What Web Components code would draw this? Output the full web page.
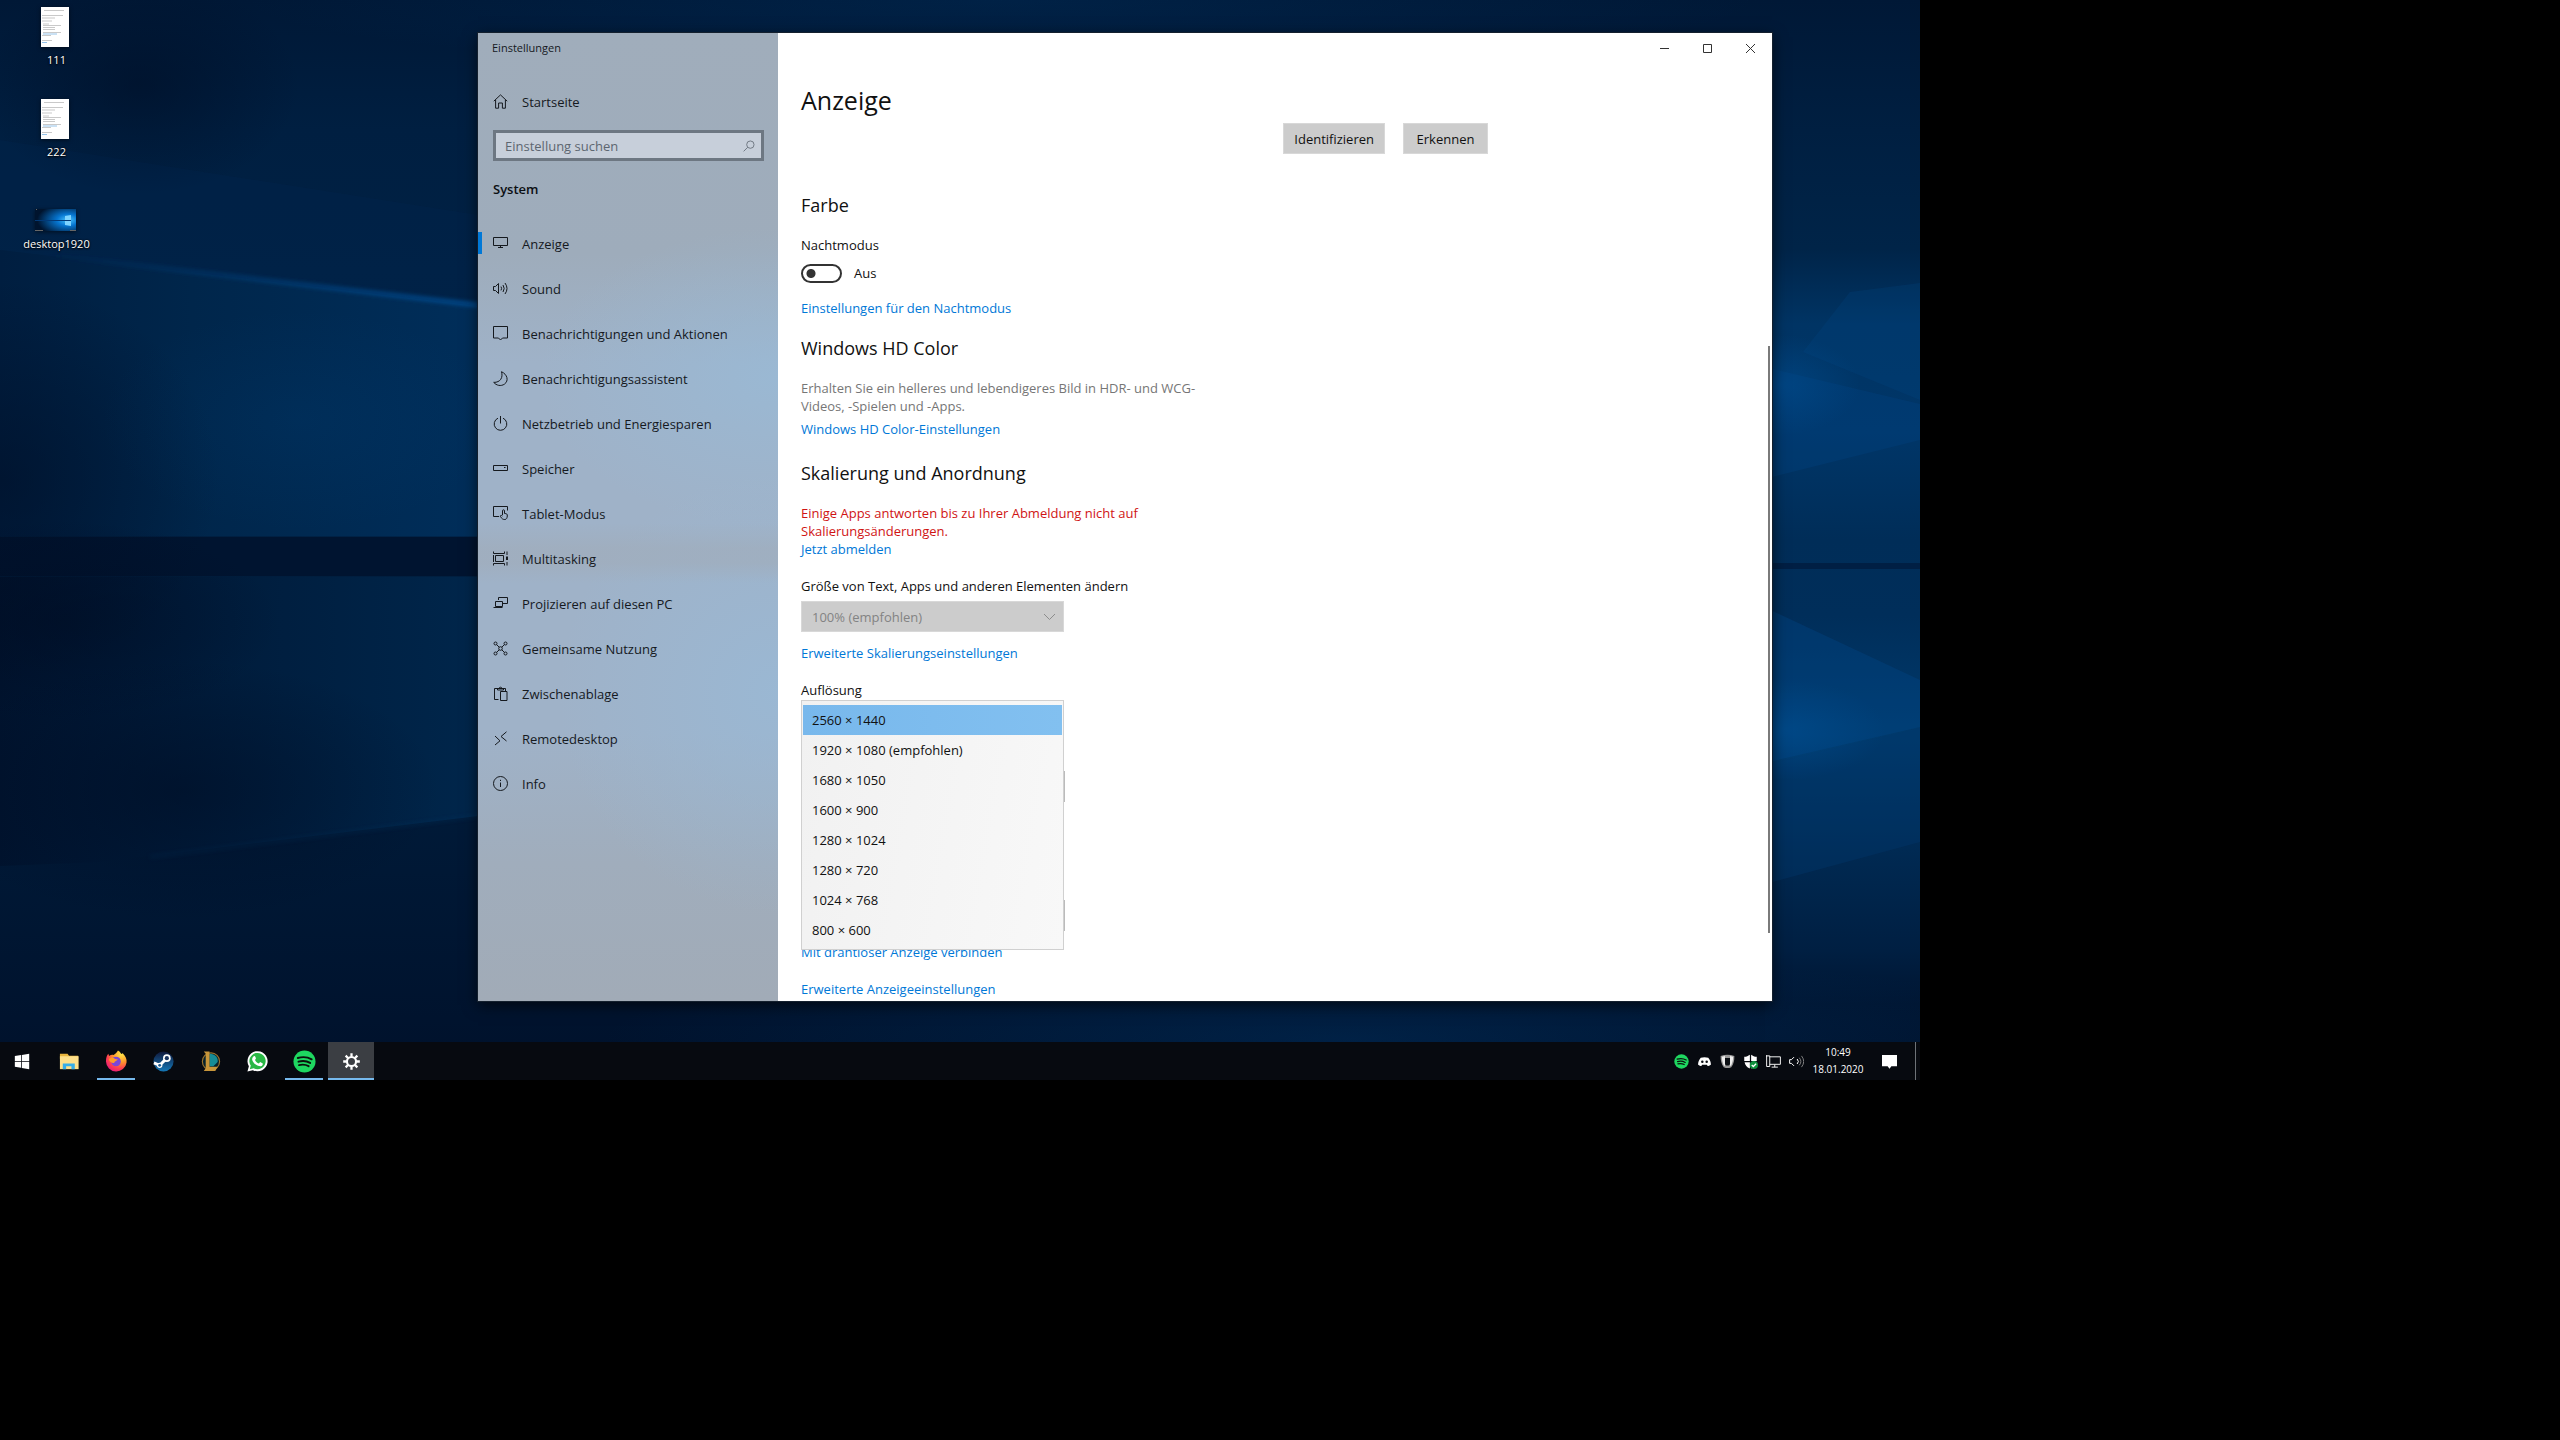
<!DOCTYPE html>
<html lang="de">
<head>
<meta charset="utf-8">
<title>Einstellungen</title>
<style>
html,body{margin:0;height:100%;background:#000;overflow:hidden}
body{font:13px/18px "Open Sans","Noto Sans",sans-serif;color:#111}
</style>
</head>
<body>
<desktop-shell>
  <wall-paper slot="wallpaper"></wall-paper>
  <desktop-file kind="doc">111</desktop-file>
  <desktop-file kind="doc">222</desktop-file>
  <desktop-file kind="picture">desktop1920</desktop-file>
  <settings-window slot="window"></settings-window>
  <task-bar slot="taskbar"></task-bar>
</desktop-shell>
<script>
const define = (name, html, setup) => {
  const tpl = document.createElement('template');
  tpl.innerHTML = html;
  customElements.define(name, class extends HTMLElement {
    connectedCallback() {
      if (this.shadowRoot) return;
      this.attachShadow({ mode: 'open' }).append(tpl.content.cloneNode(true));
      if (setup) setup(this, this.shadowRoot);
    }
  });
};

const LINE = {
  home: '<path d="M.8 7.2 7.5.9l6.7 6.3M2.6 6v8.2h3V9h3.8v5.2h3V6"/>',
  search: '<circle cx="9.2" cy="5.8" r="4.6"/><path d="M5.8 9.2.8 14.2"/>',
  display: '<path d="M.5 1.5h14v8H.5zM7.5 9.5v2M5 11.5h5"/>',
  sound: '<path d="M.5 5.5h2L5.5 2.5v10l-3-3h-2z"/><path d="M8 5.6q1.2 1.9 0 3.8M10 4q2.4 3.5 0 7M12 2q4 5.5 0 11"/>',
  notify: '<path d="M.5.5h14v11.5h-5l-2 2-2-2h-5z"/>',
  moon: '<path d="M8.5.7c5.8 2.6 7.6 9 3 12.4-3.5 2.5-8.2 1.4-10.8-1.7C7.5 11.5 10.2 6.5 8.5.7z"/>',
  power: '<path d="M5 2.2a6.3 6.3 0 1 0 5 0M7.5 0v7.5"/>',
  storage: '<path d="M.5 4.5h14v5H.5zM11 6.5h1.500"/>',
  tablet: '<path d="M6 10.5H.5v-10h14v4"/><path d="M9.5 9V4.800a1 1 0 0 1 2 0V7.500c2.200 0 3 .6 2.800 2.500-.2 2-.8 3.500-2.500 3.500-2 0-3-.7-4.500-3.200 0-1 1-1.300 2.200-.3"/>',
  multi: '<path d="M2.500 4.500h8v6h-8zM.5 4v7" /><path d="M.5.5v2h11v-2M.5 14.500v-2h11v2"/><path d="M14 .5v3.500M14 11v3.500"/><path d="M14 5.500v3.500" stroke-width="2"/>',
  project: '<path d="M5.5 4V1.500h9v6h-5M2.500 5.500h7v5h-7zM.5 11.500h9"/>',
  share: '<circle cx="2.5" cy="2.5" r="1.500"/><circle cx="12.5" cy="2.5" r="1.500"/><circle cx="2.5" cy="12.5" r="1.500"/><circle cx="12.5" cy="12.5" r="1.500"/><circle cx="7.5" cy="7.5" r="1.800"/><path d="M3.600 3.600 6.200 6.200M11.400 3.600 8.800 6.200M3.600 11.400 6.200 8.800M11.400 11.400 8.800 8.800"/>',
  clipboard: '<path d="M5.5 13.5h-4v-11h11v3M4.500 4V2.500h1.700a1.300 1.300 0 0 1 2.600 0h1.700V4zM7.500 5.500h6.500v9H7.500z"/>',
  remote: '<path d="M2 5l5 4.800L2 14M13.500.8 8 5.500 13.500 10"/>',
  info: '<circle cx="7.5" cy="7.5" r="7"/><path d="M7.5 6.500V11M7.500 3.800v1.200"/>',
  chevron: '<path d="M2 5l5.5 5.500L13 5"/>',
  minimize: '<path d="M3 7.500h9"/>',
  maximize: '<path d="M3.500 3.500h8v8h-8z"/>',
  close: '<path d="M3 3l9 9M12 3l-9 9"/>'
};
define('line-icon', `<style>
:host{display:block;width:15px;height:15px;flex:none}
svg{display:block;width:100%;height:100%;overflow:visible;fill:none;stroke:currentColor;stroke-width:1}
</style><svg viewBox="0 0 15 15" aria-hidden="true"></svg>`,
  (el, root) => { root.querySelector('svg').innerHTML = LINE[el.getAttribute('name')] || ''; });

const APP = {
  start: '<g fill="#fff"><path d="M4 6.200l6.500-1v6.300H4zM11.300 5.100 19 4v7.500h-7.700zM4 12.300h6.500v6.300l-6.500-1zM11.300 12.300H19V20l-7.700-1.200z"/></g>',
  explorer: '<path fill="#e9b63e" d="M2 4h8l1.500 2H21v3H2z"/><path fill="#fee08a" d="M2 6.500h19.500V20H2z"/><path fill="#37aee8" d="M5 14h12.500v6H14v-3H8.500v3H5z"/>',
  firefox: '<defs><radialGradient id="f" cx=".75" cy=".15" r="1"><stop offset="0" stop-color="#ffe94a"/><stop offset=".4" stop-color="#ff9a2a"/><stop offset=".7" stop-color="#ff4050"/><stop offset="1" stop-color="#e01080"/></radialGradient></defs><path fill="url(#f)" d="M1 12C1 8 2 5.500 3.500 4l.7 2.200C6 5 7.500 4.800 9 5.200 11 4 12.500 2.500 13.500.5c2 1 3 2.500 3.400 3.800l1.600-1c3 3 4.500 6 4 9.700A10.800 10.800 0 0 1 1 12z"/><circle cx="11.500" cy="12" r="5" fill="#7b46d8"/><path fill="#ff9a2a" d="M4 9.500c3-2 5-1.500 6.500-.2l3 .7c-1 1.500-3.500 1.500-4 3.500-2 .5-5-1-5.500-4z"/>',
  steam: '<defs><linearGradient id="s" x2="0" y2="1"><stop offset="0" stop-color="#10183a"/><stop offset="1" stop-color="#1478b8"/></linearGradient></defs><circle cx="12" cy="12" r="10.500" fill="url(#s)"/><path d="M2 13.500 8 16l7-7" fill="none" stroke="#fff" stroke-width="3"/><circle cx="15.500" cy="8.500" r="4" fill="#fff"/><circle cx="15.500" cy="8.500" r="2.200" fill="#18335e"/><circle cx="8" cy="16" r="2.800" fill="#fff"/><circle cx="8" cy="16" r="1.500" fill="#1a5a90"/>',
  league: '<circle cx="12.500" cy="12" r="9" fill="#06222c" stroke="#9c742d" stroke-width="1.200"/><path fill="#168c96" d="M11 4c6 0 9 4 8.500 8.500L15 17h-4z"/><path fill="#c8963a" d="M5 1.500h6v16h8.500L17 22H5l2-3V4z"/>',
  whatsapp: '<path fill="#fff" d="M1.500 22.500 3 17A10.500 10.500 0 1 1 7.200 21z"/><path fill="#29b845" d="M4 20l1-3.700A8.500 8.500 0 1 1 8 19z"/><path fill="#fff" d="M8.200 6.500c1.400-.6 1.600.8 2.200 2.400l-1 1.500c1 1.900 2.200 2.900 4 3.700l1.400-1.500 2.700 1.500c.3 2.300-2 3.300-4 2.700-4-1.200-6.500-4-7.100-6.900 0-1.500.8-2.900 1.800-3.400z"/>',
  spotify: '<circle cx="12" cy="12" r="11.500" fill="#1ed760"/><path d="M5 8.300c5-1.400 10.500-.9 14.500 1.400M5.700 12.200c4.300-1.200 8.800-.7 12.200 1.300M6.300 15.800c3.700-1 7-.6 10 1.100" fill="none" stroke="#0a120c" stroke-width="2" stroke-linecap="round"/>',
  gear: '<circle cx="12" cy="12" r="5.200" fill="none" stroke="#fff" stroke-width="2.400"/><g stroke="#fff" stroke-width="2.600"><path d="M12 2.500v4M12 17.500v4M2.500 12h4M17.500 12h4M5.300 5.300 8 8M16 16l2.700 2.700M18.700 5.300 16 8M8 16l-2.700 2.700"/></g>',
  discord: '<path fill="#fff" d="M6 6c4-1.200 8-1.200 12 0 3 3.500 4.500 8 4.200 11-2 1.500-3.600 2-5.200 2l-1.200-2h-7.600L7 19c-1.600 0-3.200-.5-5.200-2C1.500 14 3 9.500 6 6z"/><circle cx="8.500" cy="12.500" r="2" fill="#0b0f14"/><circle cx="15.500" cy="12.500" r="2" fill="#0b0f14"/>',
  cup: '<path fill="#999" d="M1 3q11-4 22 0c0 7-1 13-5 18q-6 3-12 0C2 16 1 10 1 3z"/><path fill="#eee" d="M3 4.500 8 3v16l-2-1C4 14 3 9 3 4.500zM16 3l5 1.500c0 5-1 9-3 13.500l-2 1z"/><path fill="#0b0f14" d="M8 6.500h8v9c0 4-8 4-8 0z"/>',
  shield: '<path fill="#fff" d="M11 1v10H2V4.500C6 4 8 3 11 1zM13 1c3 2 5 3 9 3.500V11h-9zM2.500 13H11v10c-5-2-7.500-5-8.500-10zM13 13h8.500c-1 5-3.500 8-8.500 10z"/><circle cx="17.500" cy="17.500" r="6.500" fill="#10913e"/><path d="M14 17.500l2.500 2.500 4.500-4.500" fill="none" stroke="#fff" stroke-width="2"/>',
  network: '<path d="M6 4.500h17v12H6M1 2v18h5V3H0M14 17v4M9 21h10" fill="none" stroke="#fff" stroke-width="1.500"/>',
  volume: '<path d="M8 5 4 9H1v6h3l4 4" fill="none" stroke="#fff" stroke-width="1.600"/><path d="M13 8q4 4 0 8" fill="none" stroke="#fff" stroke-width="1.600"/><path d="M16.500 6q5 6 0 12M20 3q7 9 0 18" fill="none" stroke="#888" stroke-width="1.500"/>',
  action: '<path fill="#fff" d="M0 1.500h24v18h-9l-3 4-3-4H0z"/>'
};
define('app-icon', `<style>
:host{display:block;width:23px;height:23px;flex:none}
svg{display:block;width:100%;height:100%}
</style><svg viewBox="0 0 24 24" aria-hidden="true"></svg>`,
  (el, root) => { root.querySelector('svg').innerHTML = APP[el.getAttribute('name')]; });

define('wall-paper', `<style>
:host{display:block;width:100%;height:100%}
svg{display:block;width:100%;height:100%}
</style>
<svg viewBox="0 0 1920 1080" preserveAspectRatio="none" aria-hidden="true">
<defs>
<linearGradient id="base" x2="0" y2="1"><stop offset="0" stop-color="#001836"/><stop offset=".12" stop-color="#001f41"/><stop offset=".25" stop-color="#002144"/><stop offset=".75" stop-color="#001a38"/><stop offset="1" stop-color="#00112b"/></linearGradient>
<linearGradient id="beam"><stop offset="0" stop-color="#001e40"/><stop offset=".1" stop-color="#00264b"/><stop offset=".25" stop-color="#002e5a"/><stop offset="1" stop-color="#00305c"/></linearGradient>
<linearGradient id="low"><stop offset="0" stop-color="#00132e"/><stop offset=".12" stop-color="#001d3d"/><stop offset=".25" stop-color="#00264b"/></linearGradient>
<linearGradient id="edge" gradientUnits="userSpaceOnUse" x1="40" y1="0" x2="478" y2="0"><stop offset="0" stop-color="#00488c" stop-opacity="0"/><stop offset="1" stop-color="#005098"/></linearGradient>
<linearGradient id="right" x2="0" y2="1"><stop offset="0" stop-color="#001836"/><stop offset=".12" stop-color="#001f41"/><stop offset=".23" stop-color="#002448"/><stop offset=".3" stop-color="#003464"/><stop offset=".4" stop-color="#003668"/><stop offset=".5" stop-color="#002d58"/><stop offset=".57" stop-color="#002e5a"/><stop offset=".68" stop-color="#003a6c"/><stop offset=".8" stop-color="#002850"/><stop offset=".88" stop-color="#001f42"/><stop offset=".93" stop-color="#001531"/><stop offset="1" stop-color="#00112b"/></linearGradient>
<radialGradient id="dark"><stop offset="0" stop-color="#000c22" stop-opacity=".5"/><stop offset="1" stop-color="#000c22" stop-opacity="0"/></radialGradient>
<radialGradient id="glow"><stop offset="0" stop-color="#00539a" stop-opacity=".45"/><stop offset="1" stop-color="#00539a" stop-opacity="0"/></radialGradient>
<filter id="soft" filterUnits="userSpaceOnUse" x="0" y="200" width="600" height="700"><feGaussianBlur stdDeviation="2"/></filter>
</defs>
<path fill="url(#base)" d="M0 0h1920v1080H0z"/>
<path fill="#00264c" opacity=".35" d="M0 140 478 215V310L0 250z"/>
<path fill="url(#beam)" d="M0 250 478 306 1920 400V538L0 536z"/>
<path fill="url(#low)" d="M0 577 1920 576V700L478 816 100 862 0 866z"/>
<path fill="#001430" d="M0 537h1920v39H0z"/>
<path d="M40 254 478 305" stroke="url(#edge)" stroke-width="4" filter="url(#soft)"/>
<path d="M150 857 478 816" stroke="#003462" stroke-width="2" opacity=".5" filter="url(#soft)"/>
<ellipse cx="0" cy="480" rx="220" ry="200" fill="url(#dark)"/>
<ellipse cx="60" cy="620" rx="220" ry="100" fill="url(#dark)"/>
<ellipse cx="140" cy="85" rx="160" ry="110" fill="url(#dark)"/>
<ellipse cx="180" cy="790" rx="260" ry="130" fill="url(#dark)"/>
<ellipse cx="300" cy="420" rx="200" ry="110" fill="url(#glow)" opacity=".25"/>
<path fill="url(#right)" d="M1765 0h155v1080h-155z"/>
<path fill="#00498a" opacity=".25" d="M1760 366 1920 404 1920 440 1760 480z"/>
<path fill="#00498a" opacity=".2" d="M1803 352 1850 292 1920 283V400z"/>
<path fill="#00498a" opacity=".35" d="M1760 605 1920 680V727L1760 764z"/>
<path fill="#00386c" opacity=".4" d="M1765 765 1920 728V842L1765 884z"/>
<path d="M1770 566h150" stroke="#001f44" stroke-width="6"/>
<ellipse cx="1780" cy="385" rx="80" ry="50" fill="url(#glow)"/>
<ellipse cx="1785" cy="730" rx="100" ry="50" fill="url(#glow)"/>
<ellipse cx="1000" cy="0" rx="760" ry="70" fill="url(#glow)" opacity=".35"/>
<ellipse cx="1350" cy="1040" rx="750" ry="90" fill="url(#glow)" opacity=".5"/>
</svg>`);

define('desktop-file', `<style>
:host{display:flex;flex-direction:column;align-items:center;width:90px;height:85px;justify-content:flex-end;gap:4px;color:#fff;font-size:11px;line-height:18px;text-shadow:0 1px 2px #000,0 0 2px #000}
svg{display:block;filter:drop-shadow(0 1px 2px #0008)}
span{padding-left:3px}
</style><svg aria-hidden="true"></svg><span><slot></slot></span>`,
  (el, root) => {
    const svg = root.querySelector('svg');
    const doc = el.getAttribute('kind') === 'doc';
    svg.setAttribute('width', doc ? 28 : 41);
    svg.setAttribute('height', doc ? 40 : 22);
    svg.setAttribute('viewBox', doc ? '0 0 28 40' : '0 0 41 22');
    svg.innerHTML = doc
      ? '<path fill="#fff" d="M0 0h28v40H0z"/><path d="M3 3.500h20M1 8.500h21M1 11h13M1 14h10M2 17h6M2 18.500h18M2 20.500h12M2 22.500h12M2 25.500h18M1 28.500h9M1 33.500h10" stroke="#bbb" stroke-width=".8"/><path d="M2 27h14M1 35.500h5" stroke="#79b4e4" stroke-width=".8"/>'
      : '<defs><radialGradient id="g" cx=".8" cy=".5" r=".75"><stop offset="0" stop-color="#49c4ff"/><stop offset=".35" stop-color="#0675d0"/><stop offset="1" stop-color="#00142e"/></radialGradient></defs><path fill="url(#g)" d="M0 0h41v22H0z"/><path fill="#7ed4ff" d="M30 7l6-1v11l-6-1z"/><path d="M0 11.500h36" stroke="#023a78"/><path d="M1 .5h1M0 21.500h8M35 21.500h6" stroke="#666"/>';
  });

define('desktop-shell', `<style>
:host{display:grid;grid-template-rows:1fr 38px;width:75vw;height:75vh;overflow:hidden;position:relative}
.wall{position:absolute;inset:0}
.files{grid-row:1;position:relative;display:flex;flex-direction:column;align-items:flex-start;width:max-content;margin-top:-16px;padding-left:10px;gap:7px}
.window{position:absolute;top:33px;left:478px;right:148px;bottom:79px;display:grid}
.bar{grid-row:2;position:relative;display:grid}
</style>
<div class="wall"><slot name="wallpaper"></slot></div>
<div class="files"><slot></slot></div>
<div class="window"><slot name="window"></slot></div>
<div class="bar"><slot name="taskbar"></slot></div>`);

define('nav-item', `<style>
:host{display:block}
a{display:flex;align-items:center;gap:14px;height:45px;padding-left:15px;color:#15191e;text-decoration:none;position:relative}
:host([current]) a::before{content:"";position:absolute;left:0;top:11px;width:4px;height:22px;background:#0078d7}
</style><a href="#"><span><slot></slot></span></a>`,
  (el, root) => {
    const icon = document.createElement('line-icon');
    icon.setAttribute('name', el.getAttribute('icon'));
    root.querySelector('a').prepend(icon);
    if (el.hasAttribute('current')) root.querySelector('a').setAttribute('aria-current', 'page');
  });

define('settings-sidebar', `<style>
:host{display:block;min-height:0;overflow:hidden;
background:linear-gradient(#a0acba00 490px,#a0acbaa0 515px,#a0acbaa0 530px,#a0acba00 550px),radial-gradient(ellipse 240px 150px at 100% 345px,#98bbd8b0 0,#98bbd800 100%),radial-gradient(ellipse 220px 220px at 100% 660px,#98bad8b0 0,#98bad800 100%),linear-gradient(#a0adbb 0,#9eacbb 220px,#9fb2c8 330px,#9fb2c8 700px,#a0adbc 830px,#a1abb7 100%)}
.title{font-size:11px;line-height:30px;padding-left:14px;color:#15191e}
nav-item.home{margin-top:16px}
.search{display:flex;align-items:center;height:31px;box-sizing:border-box;margin:6px 14px 0 15px;border:3px solid #6d7782;background:#c7cfda;padding:0 6px 0 9px;color:#5d6670}
input{flex:1;min-width:0;border:0;outline:0;background:none;font:inherit;padding:0;color:inherit}
input::placeholder{color:#5d6670;opacity:1}
.search line-icon{width:12px;height:12px}
h2{font-size:13px;line-height:24px;font-weight:600;margin:16px 0 20px;padding-left:15px;color:#0b0e12}
</style>
<div class="title">Einstellungen</div>
<nav-item class="home" icon="home">Startseite</nav-item>
<label class="search"><input type="text" placeholder="Einstellung suchen" aria-label="Einstellung suchen"><line-icon name="search"></line-icon></label>
<h2>System</h2>
<nav>
<nav-item icon="display" current>Anzeige</nav-item>
<nav-item icon="sound">Sound</nav-item>
<nav-item icon="notify">Benachrichtigungen und Aktionen</nav-item>
<nav-item icon="moon">Benachrichtigungsassistent</nav-item>
<nav-item icon="power">Netzbetrieb und Energiesparen</nav-item>
<nav-item icon="storage">Speicher</nav-item>
<nav-item icon="tablet">Tablet-Modus</nav-item>
<nav-item icon="multi">Multitasking</nav-item>
<nav-item icon="project">Projizieren auf diesen PC</nav-item>
<nav-item icon="share">Gemeinsame Nutzung</nav-item>
<nav-item icon="clipboard">Zwischenablage</nav-item>
<nav-item icon="remote">Remotedesktop</nav-item>
<nav-item icon="info">Info</nav-item>
</nav>`);

define('toggle-switch', `<style>
:host{display:block}
label{display:flex;align-items:center;gap:12px;height:20px}
input{appearance:none;margin:0;width:41px;height:19px;box-sizing:border-box;border:2px solid #333;border-radius:10px;background:radial-gradient(circle at 8px 50%,#333 4px,transparent 5px)}
</style><label><input type="checkbox" role="switch"><span><slot></slot></span></label>`);

define('resolution-menu', `<style>
:host{display:block;position:relative;width:263px;height:31px}
select{position:absolute;z-index:1;left:0;top:-5px;width:263px;height:250px;box-sizing:border-box;margin:0;padding:4px 1px;border:1px solid #d0d0d0;border-radius:0;outline:0;overflow:hidden;background:linear-gradient(100deg,#f1f1f1,#f8f8f8);font:inherit;color:#111;scrollbar-width:none}
option{display:block;box-sizing:border-box;height:30px;padding:6px 9px;line-height:18px;color:#111}
option:checked{background:linear-gradient(90deg,#78b8ec,#82c0f0);color:#111}
</style>
<select id="resolution" size="8" aria-label="Auflösung">
<option selected>2560 × 1440</option><option>1920 × 1080 (empfohlen)</option><option>1680 × 1050</option><option>1600 × 900</option><option>1280 × 1024</option><option>1280 × 720</option><option>1024 × 768</option><option>800 × 600</option>
</select>`);

define('settings-content', `<style>
:host{display:flex;flex-direction:column;min-width:0;min-height:0;overflow:hidden;background:#fff;position:relative}
.caption{display:flex;justify-content:flex-end;height:32px;flex:none}
.caption button{width:43px;height:30px;border:0;background:none;padding:0;display:grid;place-items:center;color:#333}
.scroll{flex:1;min-height:0;overflow:hidden;padding:17px 20px 0 23px}
h1{font-size:25px;line-height:36px;font-weight:400;margin:0 0 5px}
h2{font-size:18px;line-height:26px;font-weight:400;margin:18px 0}
h2.first{margin-top:38px}
h2.scale{margin:22px 0 18px}
.actions{display:flex;justify-content:flex-end;gap:18px;max-width:687px}
.actions button{height:31px;min-width:85px;padding:0 10px;border:1px solid #d8d8d8;background:#ccc;font:inherit;color:#111;border-radius:0}
p{margin:0;max-width:410px}
.muted{color:#767676}
.warn{color:#d01414}
a{display:block;width:max-content;color:#0078d7;text-decoration:none}
.label{display:block;margin-bottom:6px;width:max-content}
toggle-switch{margin:9px 0 16px}
.near{margin-top:5px}
.gap{margin-top:19px}
.combo{display:flex;position:relative;width:263px;height:31px;margin-bottom:12px}
.combo select{appearance:none;flex:1;border:1px solid #d8d8d8;border-radius:0;background:#ccc;color:#838383;font:inherit;padding:0 10px;opacity:1}
.combo line-icon{position:absolute;right:7px;top:8px;color:#8c8c8c}
.box{width:264px;height:31px;box-sizing:border-box;border:2px solid #bbb;margin-top:35px}
.box.last{margin:98px 0 12px}
.thumb{position:absolute;right:2px;top:313px;bottom:68px;width:2px;background:#7a7a7a}
</style>
<div class="caption">
<button aria-label="Minimieren"><line-icon name="minimize"></line-icon></button>
<button aria-label="Maximieren"><line-icon name="maximize"></line-icon></button>
<button aria-label="Schließen"><line-icon name="close"></line-icon></button>
</div>
<div class="scroll">
<h1>Anzeige</h1>
<div class="actions"><button>Identifizieren</button><button>Erkennen</button></div>
<h2 class="first">Farbe</h2>
<div>Nachtmodus</div>
<toggle-switch>Aus</toggle-switch>
<a href="#">Einstellungen für den Nachtmodus</a>
<h2>Windows HD Color</h2>
<p class="muted">Erhalten Sie ein helleres und lebendigeres Bild in HDR- und WCG-Videos, -Spielen und -Apps.</p>
<a class="near" href="#">Windows HD Color-Einstellungen</a>
<h2 class="scale">Skalierung und Anordnung</h2>
<p class="warn">Einige Apps antworten bis zu Ihrer Abmeldung nicht auf Skalierungsänderungen.</p>
<a href="#">Jetzt abmelden</a>
<label class="label gap" for="scale">Größe von Text, Apps und anderen Elementen ändern</label>
<div class="combo"><select id="scale" disabled><option>100% (empfohlen)</option></select><line-icon name="chevron"></line-icon></div>
<a href="#">Erweiterte Skalierungseinstellungen</a>
<div class="label gap">Auflösung</div>
<resolution-menu></resolution-menu>
<div class="box"></div>
<div class="box last"></div>
<a href="#">Mit drahtloser Anzeige verbinden</a>
<a class="gap" href="#">Erweiterte Anzeigeeinstellungen</a>
</div>
<div class="thumb"></div>`);

define('settings-window', `<style>
:host{display:grid;grid-template-columns:300px 1fr;min-height:0;box-shadow:0 0 0 1px #14202e,0 4px 14px #000a}
</style>
<settings-sidebar></settings-sidebar><settings-content></settings-content>`);

define('task-button', `<style>
:host{display:grid;width:46px}
button{border:0;padding:0;background:none;display:grid;place-items:center;position:relative}
:host([running]) button::after{content:"";position:absolute;left:4px;right:4px;bottom:0;height:2px;background:#76b9ed}
:host([active]) button{background:#3b3e43}
:host([active]) button::after{left:0;right:0}
</style><button><slot></slot></button>`,
  (el, root) => root.querySelector('button').setAttribute('aria-label', el.getAttribute('name')));

define('task-bar', `<style>
:host{display:flex;justify-content:space-between;background:#070a10;color:#fff}
.apps,.tray{display:flex}
.apps{gap:1px}
task-button:first-child{width:45px}
.apps app-icon.s{width:21px;height:21px}
.tray{align-items:center}
.icons{display:flex;gap:8px;align-items:center;margin-right:1px}
.icons app-icon{width:15px;height:15px}
time{display:block;width:66px;text-align:center;font-size:10px;line-height:17px}
.note{width:44px;display:grid;justify-items:center;border:0;background:none;padding:0 7px 0 0;box-sizing:border-box}
.note app-icon{width:15px;height:15px}
.peek{width:5px;height:38px;box-sizing:border-box;border-left:1px solid #6d7278}
</style>
<div class="apps">
<task-button name="Start"><app-icon name="start"></app-icon></task-button>
<task-button name="Explorer"><app-icon name="explorer"></app-icon></task-button>
<task-button name="Firefox" running><app-icon name="firefox"></app-icon></task-button>
<task-button name="Steam"><app-icon name="steam"></app-icon></task-button>
<task-button name="League of Legends"><app-icon name="league"></app-icon></task-button>
<task-button name="WhatsApp"><app-icon name="whatsapp"></app-icon></task-button>
<task-button name="Spotify" running><app-icon name="spotify"></app-icon></task-button>
<task-button name="Einstellungen" running active><app-icon class="s" name="gear"></app-icon></task-button>
</div>
<div class="tray">
<div class="icons"><app-icon name="spotify"></app-icon><app-icon name="discord"></app-icon><app-icon name="cup"></app-icon><app-icon name="shield"></app-icon><app-icon name="network"></app-icon><app-icon name="volume"></app-icon></div>
<time datetime="2020-01-18T10:49">10:49<br>18.01.2020</time>
<button class="note" aria-label="Info-Center"><app-icon name="action"></app-icon></button>
<div class="peek"></div>
</div>`);
</script>
</body>
</html>
